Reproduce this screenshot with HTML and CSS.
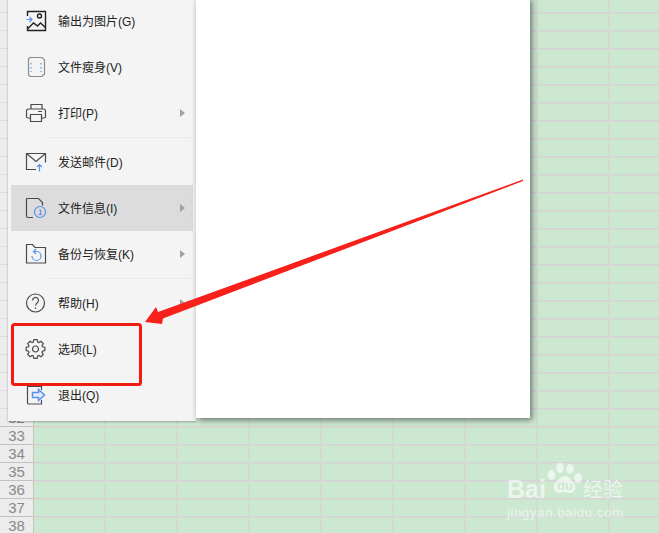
FILE: index.html
```html
<!DOCTYPE html>
<html lang="zh-CN">
<head>
    <meta charset="UTF-8">
    <title>选项</title>
    <link rel="stylesheet" href="styles.css">
</head>
<body>

<div class="app">
    <!-- spreadsheet behind the menu -->
    <div class="row-head">
        <div class="row-num">32</div>
        <div class="row-num">33</div>
        <div class="row-num">34</div>
        <div class="row-num">35</div>
        <div class="row-num">36</div>
        <div class="row-num">37</div>
        <div class="row-num">38</div>
    </div>
    <div class="sheet"></div>

    <!-- file menu and print preview page -->
    <div class="overlay">
        <div class="menu">
            <div class="menu-item">
                <svg class="icon" viewBox="0 0 24 24"><path class="ln dark" d="M3.500 7V2.500h18v19h-18V17"/><circle class="ln dark" cx="15.500" cy="7" r="2"/><path class="ln dark" d="M3.500 20l6-6 4 3 3-3 5 4.500"/><path class="bl" d="M2.500 10.500h5.500M5.500 8l2.500 2.500L5.500 13"/></svg>
                <span class="label">输出为图片(G)</span>
            </div>
            <div class="menu-item">
                <svg class="icon" viewBox="0 0 24 24"><path class="gr" d="M6 2.500h12l2.500 2.500v14l-2.500 2.500H6L4.500 20V4z"/><path class="bl dots" d="M7 8v9M17 8v9"/></svg>
                <span class="label">文件瘦身(V)</span>
            </div>
            <div class="menu-item">
                <svg class="icon" viewBox="0 0 24 24"><path class="ln" d="M7 8V3.500h11V8M6.500 17H4a1.500 1.500 0 0 1-1.500-1.500V10A2 2 0 0 1 4.500 8h15a2 2 0 0 1 2 2v5.500A1.500 1.500 0 0 1 20 17h-2.500"/><path class="ln" d="M6.500 13.500h11v7h-11zM14 10.500h4"/></svg>
                <span class="label">打印(P)</span>
                <span class="caret"></span>
            </div>
            <div class="menu-sep"></div>
            <div class="menu-item">
                <svg class="icon" viewBox="0 0 24 24"><path class="ln" d="M12 19.500H2.500v-16h19v9"/><path class="ln" d="M2.500 3.500l9.500 8 9.500-8"/><path class="bl" d="M15.500 21.500v-7M13 17l2.500-2.500L18 17"/></svg>
                <span class="label">发送邮件(D)</span>
            </div>
            <div class="menu-item active">
                <svg class="icon" viewBox="0 0 24 24"><path class="ln" d="M9 21.500H4a1.500 1.500 0 0 1-1.500-1.500V3.500a1 1 0 0 1 1-1h11l4 4v3"/><circle class="bl" cx="16" cy="16" r="5.500"/><path class="bl" d="M15 14h1.500v4.500M14.500 18.500h3.500"/></svg>
                <span class="label">文件信息(I)</span>
                <span class="caret"></span>
            </div>
            <div class="menu-item">
                <svg class="icon" viewBox="0 0 24 24"><path class="ln" d="M2.500 2.500h6l2.500 3h10.500v15.500h-19z"/><path class="bl" d="M10 9.500h2.500a4.500 4.500 0 1 1-4.500 4.500M12 7l-2.500 2.500L12 12"/></svg>
                <span class="label">备份与恢复(K)</span>
                <span class="caret"></span>
            </div>
            <div class="menu-sep"></div>
            <div class="menu-item">
                <svg class="icon" viewBox="0 0 24 24"><circle class="ln" cx="11.500" cy="12" r="9"/><path class="ln" d="M8.500 9.500a3 3 0 1 1 4.600 2.500c-1 .7-1.600 1.200-1.600 2.500"/><path class="ln" d="M11.500 16.500v1.500"/></svg>
                <span class="label">帮助(H)</span>
                <span class="caret"></span>
            </div>
            <div class="menu-item">
                <svg class="icon" viewBox="0 0 24 24"><g transform="translate(11.500 12)"><polygon class="ln" points="6.940,-2.260 9.360,-1.650 9.360,1.650 6.940,2.260 6.500,3.310 7.780,5.450 5.450,7.780 3.310,6.500 2.260,6.940 1.650,9.360 -1.650,9.360 -2.260,6.940 -3.310,6.500 -5.450,7.780 -7.780,5.450 -6.500,3.310 -6.940,2.260 -9.360,1.650 -9.360,-1.650 -6.940,-2.260 -6.500,-3.310 -7.780,-5.450 -5.450,-7.780 -3.310,-6.500 -2.260,-6.940 -1.650,-9.360 1.650,-9.360 2.260,-6.940 3.310,-6.500 5.450,-7.780 7.780,-5.450 6.500,-3.310"/><circle class="ln" r="3"/></g></svg>
                <span class="label">选项(L)</span>
            </div>
            <div class="menu-item">
                <svg class="icon" viewBox="0 0 24 24"><path class="ln" d="M3.500 7V3.500h14V7M3.500 17v3a1 1 0 0 0 1 1h13v-4M3.500 7v10"/><path class="bl arrow-fill" d="M8.500 9.500h6V6.500l6 5.500-6 5.500v-3h-6z"/></svg>
                <span class="label">退出(Q)</span>
            </div>
        </div>
        <div class="paper"></div>
    </div>

    <!-- red annotation drawn on the screenshot -->
    <svg class="markup" viewBox="0 0 659 533">
        <rect class="markup-box" x="12.500" y="324.500" width="128" height="60" rx="2"/>
        <polygon class="markup-arrow" points="145,322 156,307 158,312 523,179.500 523,181 163,318.500 162,324"/>
    </svg>

    <!-- watermark -->
    <div class="watermark">
        <div class="wm-top">
            <span class="wm-bai">Bai</span>
            <svg class="wm-paw" viewBox="0 0 36 36">
                <ellipse cx="4.500" cy="12" rx="3.800" ry="5"/>
                <ellipse cx="13" cy="5" rx="3.800" ry="5"/>
                <ellipse cx="23" cy="6" rx="3.600" ry="5"/>
                <ellipse cx="31" cy="15" rx="3.800" ry="5"/>
                <path d="M18 13c4 0 6 4 9 7 3 4 1 10-4 10-2 0-3-1-5-1s-3 1-6 1c-5 0-7-6-4-10 3-3 6-7 10-7z"/>
                <text class="wm-du" x="18" y="27">du</text>
            </svg>
            <span class="wm-cn">经验</span>
        </div>
        <div class="wm-url">jingyan.baidu.com</div>
    </div>
</div>

</body>
</html>
```

FILE: styles.css
```css
/* General Page Styles */
body {
    margin: 0;
    font-family: "Liberation Sans", "Noto Sans CJK SC", sans-serif;
    color: #333;
}

.app {
    position: relative;
    display: flex;
    width: 659px;
    height: 533px;
    overflow: hidden;
}

/* Spreadsheet */
.row-head {
    box-sizing: border-box;
    flex: 0 0 34px;
    padding-top: 409px;
    border-right: 1px solid #c4c4c4;
    background-color: #ececec;
    background-image: linear-gradient(#dedede 1px, transparent 1px);
    background-size: 100% 18px;
    background-position: 0 12px;
}

.row-num {
    box-sizing: border-box;
    height: 18px;
    line-height: 18px;
    border-bottom: 1px solid #c2c2c2;
    text-align: center;
    font-family: "Liberation Sans", sans-serif;
    font-size: 15px;
    color: #8a8a8a;
}

.sheet {
    flex: 1;
    background-color: #cde8d1;
    background-image:
        linear-gradient(#d6d2d6 1px, #d1dcd3 1px, #d1dcd3 2px, transparent 2px),
        linear-gradient(90deg, #d4d6d4 1px, #d0ddd3 1px, #d0ddd3 2px, transparent 2px);
    background-size: 100% 18px, 72px 100%;
    background-position: 0 12px, 70px 0;
}

/* Menu and page */
.overlay {
    position: absolute;
    top: -2px;
    left: 8px;
    display: flex;
    align-items: flex-start;
}

.menu {
    box-sizing: border-box;
    width: 188px;
    height: 423px;
    background: #f4f4f4;
    box-shadow: 0 1px 2px rgba(0, 0, 0, 0.3);
}

.menu-item {
    display: flex;
    align-items: center;
    height: 46px;
    margin-left: 3px;
    margin-right: 3px;
    padding-left: 13px;
}

.menu-item.active {
    background: #dcdcdc;
}

.menu-sep {
    height: 1px;
    margin: 1px 4px 1px 38px;
    background: #ebebeb;
}

.icon {
    flex: none;
    width: 24px;
    height: 24px;
    margin-right: 10px;
}

.label {
    flex: 1;
    margin-bottom: 1px;
    font-size: 12px;
    color: #222;
}

.caret {
    width: 0;
    height: 0;
    margin-right: 8px;
    border-left: 5px solid #a0a0a0;
    border-top: 4px solid transparent;
    border-bottom: 4px solid transparent;
}

.ln, .gr, .bl {
    fill: none;
    stroke-width: 1.2;
}

.ln {
    stroke: #4a4a4a;
}

.ln.dark {
    stroke: #222;
    stroke-width: 1.4;
}

.gr {
    stroke: #8c8c8c;
}

.bl {
    stroke: #5b93ea;
}

.arrow-fill {
    fill: #e3edfb;
    stroke-width: 1.5;
}

.dots {
    stroke-dasharray: 1.5 2.5;
}

.paper {
    width: 334px;
    height: 420px;
    background: #fff;
    box-shadow: 2px 2px 6px rgba(0, 0, 0, 0.5);
}

/* Red markup */
.markup {
    position: absolute;
    top: 0;
    left: 0;
    width: 659px;
    height: 533px;
}

.markup-box {
    fill: none;
    stroke: #f01c12;
    stroke-width: 3;
}

.markup-arrow {
    fill: #f8201a;
}

/* Watermark */
.watermark {
    position: absolute;
    left: 507px;
    top: 462px;
    width: 130px;
    white-space: nowrap;
    color: rgba(255, 255, 255, 0.6);
}

.wm-top {
    display: flex;
    align-items: flex-end;
    height: 38px;
}

.wm-bai {
    margin-bottom: -4px;
    font-family: "Liberation Sans", sans-serif;
    font-size: 25px;
    font-weight: bold;
    line-height: 30px;
}

.wm-paw {
    flex: none;
    width: 36px;
    height: 36px;
    margin-left: 1px;
    margin-bottom: 1px;
    fill: rgba(255, 255, 255, 0.6);
}

.wm-du {
    font-family: "Liberation Sans", sans-serif;
    font-size: 13px;
    font-weight: bold;
    text-anchor: middle;
    fill: #cde8d1;
}

.wm-cn {
    margin-bottom: -5px;
    font-size: 20px;
    line-height: 30px;
}

.wm-url {
    margin-top: 5px;
    font-family: "Liberation Sans", sans-serif;
    font-size: 13px;
    line-height: 15px;
    letter-spacing: 0.7px;
}
```
